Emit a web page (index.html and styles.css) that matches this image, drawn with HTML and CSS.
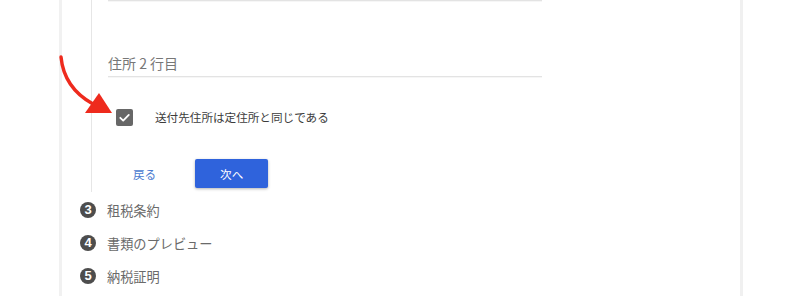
FILE: index.html
```html
<!DOCTYPE html>
<html lang="ja">
<head>
<meta charset="utf-8">
<link rel="stylesheet" href="styles.css">
</head>
<body>
<div class="frame">
  <div class="panel">
    <div class="step-body">
      <div class="field field-top"></div>
      <div class="field field-addr2"><span class="placeholder">住所 2 行目</span></div>
      <label class="check-row">
        <span class="checkbox">
          <svg viewBox="0 0 17 17" width="17" height="17"><path d="M4.3 8.8 L7.2 11.6 L12.8 5.9" fill="none" stroke="#fff" stroke-width="1.8" stroke-linecap="round" stroke-linejoin="round"/></svg>
        </span>
        <span class="check-label">送付先住所は定住所と同じである</span>
      </label>
      <div class="actions">
        <span class="btn-back">戻る</span>
        <span class="btn-next">次へ</span>
      </div>
    </div>
    <ul class="steps">
      <li class="step"><span class="num">3</span><span class="step-name">租税条約</span></li>
      <li class="step"><span class="num">4</span><span class="step-name">書類のプレビュー</span></li>
      <li class="step"><span class="num">5</span><span class="step-name">納税証明</span></li>
    </ul>
  </div>
</div>
<svg class="arrow" viewBox="0 0 800 296" width="800" height="296">
  <path d="M61 57 Q64 88 93 104" fill="none" stroke="#ee2a1d" stroke-width="3.4" stroke-linecap="round"/>
  <polygon points="85,113 99,93 112,113" fill="#ee2a1d"/>
</svg>
</body>
</html>
```
FILE: styles.css
```css
html, body {
  margin: 0;
  padding: 0;
  background: #fff;
  width: 800px;
  height: 296px;
  overflow: hidden;
  font-family: "Noto Sans CJK JP", "Noto Sans", "Liberation Sans", sans-serif;
}
.frame {
  position: relative;
  margin-left: 59px;
  width: 678px;
  height: 296px;
  border-left: 3px solid #f1f1f1;
  border-right: 3px solid #f0f0f0;
}
.panel {
  display: flex;
  flex-direction: column;
}
.step-body {
  margin-left: 29px;
  border-left: 1px solid #e6e6e6;
  padding-left: 16px;
  height: 192px;
  box-sizing: border-box;
  display: flex;
  flex-direction: column;
}
.field {
  width: 434px;
  border-bottom: 1px solid #e3e3e3;
  box-shadow: 0 1px 0 #f6f6f6;
}
.field-top {
  height: 0;
}
.field-addr2 {
  margin-top: 52px;
  height: 23px;
  display: flex;
  align-items: flex-start;
}
.placeholder {
  font-size: 14px;
  line-height: 20px;
  color: #777;
}
.check-row {
  display: flex;
  align-items: center;
  margin-top: 31px;
  margin-left: 8px;
  height: 18px;
}
.checkbox {
  flex: none;
  width: 17px;
  height: 17px;
  background: #676767;
  border-radius: 2px;
  display: flex;
}
.check-label {
  margin-left: 22px;
  font-size: 11.6px;
  color: #3c3c3c;
  line-height: 18px;
}
.actions {
  display: flex;
  align-items: center;
  margin-top: 33px;
  margin-left: 25px;
}
.btn-back {
  font-size: 11.6px;
  color: #4a7bd0;
  line-height: 16px;
}
.btn-next {
  margin-left: 39px;
  width: 73px;
  height: 29px;
  background: #2f63dc;
  color: #fff;
  font-size: 11.6px;
  border-radius: 2px;
  box-shadow: 0 1px 3px rgba(0,0,0,0.3);
  display: flex;
  align-items: center;
  justify-content: center;
}
.steps {
  list-style: none;
  margin: 0;
  padding: 0 0 0 18px;
  display: flex;
  flex-direction: column;
  gap: 13px;
  margin-top: 8px;
}
.step {
  display: flex;
  align-items: center;
  height: 20px;
}
.num {
  flex: none;
  width: 16px;
  height: 16px;
  border-radius: 50%;
  background: #4d4d4d;
  color: #fff;
  font-family: "Liberation Sans", sans-serif;
  font-weight: bold;
  font-size: 13px;
  line-height: 16px;
  display: flex;
  align-items: center;
  justify-content: center;
}
.step-name {
  margin-left: 11px;
  font-size: 13.2px;
  color: #6a6a6a;
}
.arrow {
  position: absolute;
  left: 0;
  top: 0;
  pointer-events: none;
}
```
